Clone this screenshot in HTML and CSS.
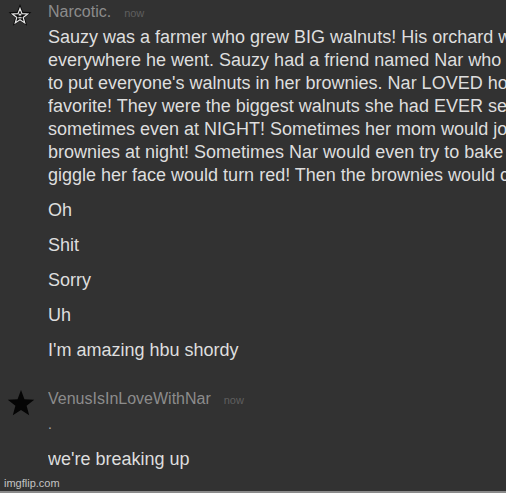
FILE: index.html
```html
<!DOCTYPE html>
<html lang="en">
<head>
    <meta charset="UTF-8">
    <meta name="viewport" content="width=device-width, initial-scale=1.0">
    <title>chat</title>
    <link rel="stylesheet" href="styles.css">
</head>
<body>
    <main class="chat">
        <section class="group">
            <div class="avatar">
                <svg class="star outline" viewBox="0 0 28 28" width="26" height="26">
                    <polygon points="14,1 17.23,9.55 26.36,9.98 19.23,15.7 21.64,24.52 14,19.5 6.36,24.52 8.77,15.7 1.64,9.98 10.77,9.55" fill="#0c0c0c"/>
                    <polygon points="14,1 17.23,9.55 26.36,9.98 19.23,15.7 21.64,24.52 14,19.5 6.36,24.52 8.77,15.7 1.64,9.98 10.77,9.55" fill="none" stroke="#e8e8e8" stroke-width="2" transform="translate(14 14.5) scale(.66) translate(-14 -14)"/>
                    <rect x="12.6" y="11.5" width="2.8" height="2" fill="#ddd"/>
                    <rect x="12.2" y="15" width="3.6" height="1.6" fill="#ccc"/>
                </svg>
            </div>
            <div class="body">
                <div class="meta"><span class="name">Narcotic.</span><span class="time">now</span></div>
                <p class="msg long">
                    <span>Sauzy was a farmer who grew BIG walnuts! His orchard was famous</span>
                    <span>everywhere he went. Sauzy had a friend named Nar who loved to bake</span>
                    <span>to put everyone's walnuts in her brownies. Nar LOVED how BIG they were</span>
                    <span>favorite! They were the biggest walnuts she had EVER seen in her life</span>
                    <span>sometimes even at NIGHT! Sometimes her mom would join in and bake</span>
                    <span>brownies at night! Sometimes Nar would even try to bake two trays at once</span>
                    <span>giggle her face would turn red! Then the brownies would come out perfect</span>
                </p>
                <p class="msg">Oh</p>
                <p class="msg">Shit</p>
                <p class="msg">Sorry</p>
                <p class="msg">Uh</p>
                <p class="msg">I'm amazing hbu shordy</p>
            </div>
        </section>

        <section class="group second">
            <div class="avatar">
                <svg class="star" viewBox="0 0 28 28" width="30" height="30">
                    <polygon points="14,1 17.23,9.55 26.36,9.98 19.23,15.7 21.64,24.52 14,19.5 6.36,24.52 8.77,15.7 1.64,9.98 10.77,9.55" fill="#050505"/>
                </svg>
            </div>
            <div class="body">
                <div class="meta"><span class="name">VenusIsInLoveWithNar</span><span class="time">now</span></div>
                <p class="msg dot">.</p>
                <p class="msg">we're breaking up</p>
            </div>
        </section>
    </main>
    <div class="watermark">imgflip.com</div>
</body>
</html>
```

FILE: styles.css
```css
*, *::before, *::after{
    box-sizing: border-box;
    margin: 0;
    padding: 0;
}

body{
    position: relative;
    height: 493px;
    overflow: hidden;
    background: #323232;
    border-bottom: 2px solid #8a8a8a;
    font-family: "Liberation Sans", Arial, sans-serif;
    color: #dedede;
}

.chat{
    display: flex;
    flex-direction: column;
    gap: 27px;
    padding-top: 2px;
}

.group{
    display: flex;
}

.avatar{
    width: 48px;
    flex: none;
    padding-left: 7px;

    .star{
        display: block;
    }

    .outline{
        margin-top: 1px;
    }
}

.second .avatar{
    padding-left: 6px;
}

.body{
    flex: 1;
    min-width: 0;
    overflow: hidden;
}

.meta{
    display: flex;
    align-items: baseline;
    gap: 13px;
    height: 20px;
    line-height: 20px;
    margin-bottom: 4px;

    .name{
        font-size: 16px;
        color: #8c8c8c;
    }

    .time{
        font-size: 11px;
        color: #5f5f5f;
    }
}

.msg{
    font-size: 18px;
    line-height: 23px;
    white-space: nowrap;

    & + .msg{
        margin-top: 12px;
    }

    span{
        display: block;
    }
}

.msg.dot{
    font-size: 14px;
    color: #aaa;
}

.watermark{
    position: absolute;
    left: 4px;
    bottom: 2px;
    font-size: 11px;
    color: #c4c4c4;
}
```
